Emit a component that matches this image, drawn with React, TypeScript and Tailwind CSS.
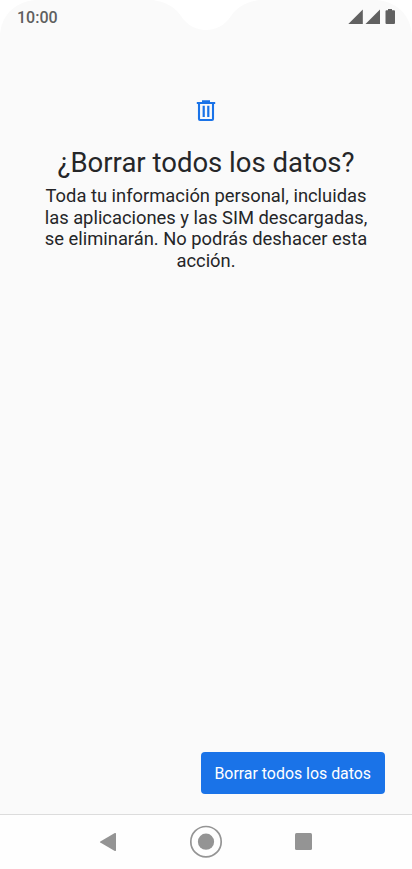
import type { ReactNode } from 'react';

const bodyLines = [
  'Toda tu información personal, incluidas',
  'las aplicaciones y las SIM descargadas,',
  'se eliminarán. No podrás deshacer esta',
  'acción.',
];

function StatusBar() {
  return (
    <header className="relative h-[36px] shrink-0">
      {/* screen corners and camera notch */}
      <svg className="absolute inset-0" width="412" height="36" viewBox="0 0 412 36" fill="#fff">
        <path d="M0 0H35C15 2 1 15 0 36Z" />
        <path d="M412 0H377C397 2 411 15 412 36Z" />
        <path d="M153 0C166 2 175 7 181 16C187 25 196 30 206 30C216 30 225 25 231 16C237 7 246 2 259 0Z" />
      </svg>
      <div className="relative flex items-start justify-between pl-[17px] pr-4 pt-[7px]">
        <span className="pt-px text-[16px] leading-[20px] font-medium text-[#5f5f5f]">10:00</span>
        <StatusIcons />
      </div>
    </header>
  );
}

function StatusIcons() {
  return (
    <svg width="48" height="18" viewBox="348 7 48 18" fill="#616161">
      <path d="M348.3 24L362.8 9.5V24Z" />
      <path d="M365.5 24L380 9.5V24Z" />
      <path d="M388 9h4v1.200h2a1 1 0 0 1 1 1V23a1 1 0 0 1-1 1h-7.500a1 1 0 0 1-1-1V11.200a1 1 0 0 1 1-1h1.500Z" />
    </svg>
  );
}

function TrashIcon() {
  return (
    <svg width="20" height="24" viewBox="0 0 20 24" fill="none" stroke="#1a73e8">
      <path d="M.8 4H19.200M6 2.300H14" strokeWidth="2" />
      <path d="M3 4V20a1 1 0 0 0 1 1H16a1 1 0 0 0 1-1V4" strokeWidth="2.100" />
      <path d="M7.700 6.800V18M12.300 6.800V18" strokeWidth="2.200" />
    </svg>
  );
}

function NavButton({ label, children }: { label: string; children: ReactNode }) {
  return (
    <button aria-label={label} className="flex h-full w-[98px] items-center justify-center">
      {children}
    </button>
  );
}

function NavBar() {
  return (
    <nav className="flex h-[55px] shrink-0 justify-center border-t border-[#dcdcdc] bg-[#fefefe] pb-px">
      <NavButton label="Atrás">
        <svg width="18" height="20" viewBox="0 0 18 20" fill="#949494">
          <path d="M1.300 9.400L15.800 1.100Q17 .5 17 1.700V18.300Q17 19.500 15.800 18.900L1.300 10.600Q.5 10 1.300 9.400Z" />
        </svg>
      </NavButton>
      <NavButton label="Inicio">
        <svg width="34" height="34" viewBox="0 0 34 34">
          <circle cx="17" cy="16.700" r="15.200" fill="none" stroke="#949494" strokeWidth="1.700" />
          <circle cx="17" cy="16.700" r="8.100" fill="#949494" />
        </svg>
      </NavButton>
      <NavButton label="Recientes">
        <span className="mr-[2px] h-[17px] w-[17px] rounded-[1.500px] bg-[#949494]" />
      </NavButton>
    </nav>
  );
}

export default function App() {
  return (
    <div className="flex h-[869px] w-[412px] flex-col overflow-hidden bg-[#fafafa] font-['Roboto',sans-serif] text-[#252628]">
      <StatusBar />
      <main className="flex flex-1 flex-col items-center pt-[63px]">
        <TrashIcon />
        <h1 className="mt-[22px] whitespace-nowrap text-[27.500px] leading-[36px]">¿Borrar todos los datos?</h1>
        <p className="mt-[4px] text-center text-[18.350px] leading-[21.700px]">
          {bodyLines.map((line) => (
            <span key={line} className="block whitespace-nowrap">{line}</span>
          ))}
        </p>
        <button className="mt-auto mr-[27.500px] mb-[20px] h-[42px] w-[183.500px] self-end rounded-[4px] bg-[#1a73e8] pt-[2px] text-[15.900px] text-white">
          Borrar todos los datos
        </button>
      </main>
      <NavBar />
    </div>
  );
}
